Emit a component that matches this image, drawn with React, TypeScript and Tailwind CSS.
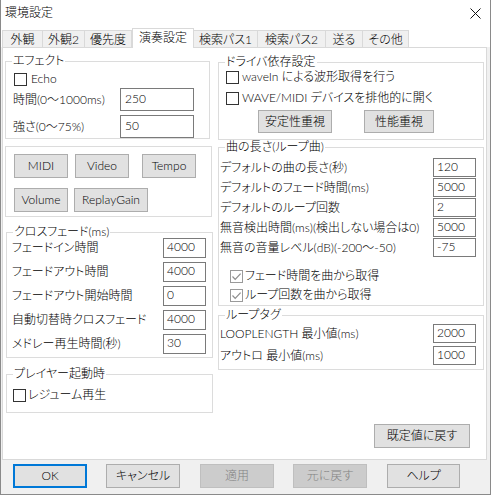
import React from "react";

function Check({ checked = false }: { checked?: boolean }) {
    return (
        <span
            className={`flex h-[13px] w-[13px] shrink-0 items-center justify-center border bg-white ${checked ? "border-[#9a9a9a]" : "border-[#333333]"}`}
        >
            {checked && (
                <svg width="11" height="11" viewBox="0 0 11 11">
                    <path d="M1.5 5.5 L4.2 8.3 L9.6 2.6" fill="none" stroke="#8c8c8c" strokeWidth="1.2" />
                </svg>
            )}
        </span>
    );
}

function Btn({ children, className = "" }: { children: React.ReactNode; className?: string }) {
    return (
        <div className={`flex shrink-0 items-center justify-center border border-[#adadad] bg-[#e1e1e1] ${className}`}>
            {children}
        </div>
    );
}

function Field({ value, className = "" }: { value: string; className?: string }) {
    return (
        <div className={`shrink-0 border border-[#7a7a7a] bg-white ${className}`}>{value}</div>
    );
}

function Group({ title, className = "", children }: { title?: string; className?: string; children: React.ReactNode }) {
    return (
        <fieldset className={`border border-[#dcdcdc] ${className}`}>
            {title && <legend className="ml-[6px] px-[1px] leading-[14px]">{title}</legend>}
            {children}
        </fieldset>
    );
}

// small numeric box used in the crossfade group
function NumRow({ label, value }: { label: string; value: string }) {
    return (
        <div className="flex h-[20px] items-center">
            <span className="flex-1 whitespace-nowrap">{label}</span>
            <Field value={value} className="h-[20px] w-[43px] pl-[3px] leading-[16px]" />
        </div>
    );
}

function SongRow({ label, value }: { label: string; value: string }) {
    return (
        <div className="flex h-[19px] items-center">
            <span className="flex-1 whitespace-nowrap">{label}</span>
            <Field value={value} className="h-[19px] w-[43px] pl-[3px] leading-[15px]" />
        </div>
    );
}

const tabs = [
    { name: "外観", w: "w-[41px]" },
    { name: "外観2", w: "w-[42px]" },
    { name: "優先度", w: "w-[47px]" },
    { name: "演奏設定", w: "w-[62px]", active: true },
    { name: "検索パス1", w: "w-[64px]" },
    { name: "検索パス2", w: "w-[68px]" },
    { name: "送る", w: "w-[37px]" },
    { name: "その他", w: "w-[46px]" },
];

export default function App() {
    return (
        <div className="flex h-[495px] w-[491px] flex-col border-x border-b border-[#8a8a8a] bg-white font-['Lato','Noto_Sans_CJK_JP',sans-serif] text-[12px] font-light leading-[14px] text-black [font-feature-settings:'palt']">
            {/* title bar */}
            <div className="flex h-[28px] shrink-0 items-center justify-between pb-[2px] pl-[4px] pr-[9px]">
                <span>環境設定</span>
                <svg width="11" height="11" viewBox="0 0 11 11">
                    <path d="M0.5 0.5 L10.5 10.5 M10.5 0.5 L0.5 10.5" stroke="#111" strokeWidth="1" />
                </svg>
            </div>

            {/* tabs */}
            <div className="flex h-[19px] shrink-0 items-end pl-[1px]">
                {tabs.map((t, i) =>
                    t.active ? (
                        <div
                            key={t.name}
                            className={`relative z-10 mb-[-1px] flex h-[20px] items-center justify-center border-x border-t border-[#d9d9d9] bg-white pb-[1px] ${t.w}`}
                        >
                            {t.name}
                        </div>
                    ) : (
                        <div
                            key={t.name}
                            className={`flex h-[17px] items-center justify-center border-t border-r border-[#d9d9d9] bg-[#f0f0f0] pt-[2px] ${i === 0 ? "border-l" : ""} ${t.w}`}
                        >
                            {t.name}
                        </div>
                    )
                )}
            </div>

            <div className="flex flex-1 flex-col bg-[#f0f0f0]">
                {/* tab panel */}
                <div className="ml-[1px] flex h-[413px] w-[485px] border border-[#d9d9d9] bg-white pl-[2px] pt-[6px]">
                    {/* left column */}
                    <div className="flex w-[208px] flex-col">
                        <Group title="エフェクト" className="w-[205px]">
                            <div className="flex flex-col pl-[7px] pr-[15px] pt-[3px]">
                                <div className="flex h-[16px] items-center gap-[4px] pl-[1px]">
                                    <Check />
                                    <span>Echo</span>
                                </div>
                                <div className="mt-[1px] flex h-[23px] items-center">
                                    <span className="flex-1">時間(0〜1000ms)</span>
                                    <Field value="250" className="h-[23px] w-[74px] pl-[4px] pt-[3px]" />
                                </div>
                                <div className="mt-[4px] flex h-[23px] items-center">
                                    <span className="flex-1">強さ(0〜75%)</span>
                                    <Field value="50" className="h-[23px] w-[74px] pl-[4px] pt-[3px]" />
                                </div>
                            </div>
                        </Group>

                        <Group className="mt-[7px] w-[207px]">
                            <div className="flex flex-col gap-[10px] pb-[4px] pl-[8px] pt-[7px]">
                                <div className="flex">
                                    <Btn className="h-[24px] w-[54px]">MIDI</Btn>
                                    <Btn className="ml-[7px] h-[24px] w-[54px]">Video</Btn>
                                    <Btn className="ml-[13px] h-[24px] w-[54px]">Tempo</Btn>
                                </div>
                                <div className="flex">
                                    <Btn className="h-[24px] w-[54px]">Volume</Btn>
                                    <Btn className="ml-[6px] h-[24px] w-[74px]">ReplayGain</Btn>
                                </div>
                            </div>
                        </Group>

                        <Group title="クロスフェード(ms)" className="ml-[1px] mt-[8px] w-[207px]">
                            <div className="mt-[-1px] flex flex-col gap-[4px] pb-[3px] pl-[5px] pr-[6px]">
                                <NumRow label="フェードイン時間" value="4000" />
                                <NumRow label="フェードアウト時間" value="4000" />
                                <NumRow label="フェードアウト開始時間" value="0" />
                                <NumRow label="自動切替時クロスフェード" value="4000" />
                                <NumRow label="メドレー再生時間(秒)" value="30" />
                            </div>
                        </Group>

                        <Group title="プレイヤー起動時" className="ml-[1px] mt-[9px] w-[207px]">
                            <div className="mb-[9px] mt-[6px] flex h-[16px] items-center gap-[2px] pl-[6px]">
                                <Check />
                                <span>レジューム再生</span>
                            </div>
                        </Group>
                    </div>

                    {/* right column */}
                    <div className="ml-[5px] flex w-[266px] flex-col pt-[1px]">
                        <Group title="ドライバ依存設定" className="w-[266px]">
                            <div className="flex flex-col pb-[6px] pl-[7px]">
                                <div className="flex h-[16px] items-center gap-[3px]">
                                    <Check />
                                    <span>waveIn による波形取得を行う</span>
                                </div>
                                <div className="mt-[5px] flex h-[16px] items-center gap-[3px]">
                                    <Check />
                                    <span>WAVE/MIDI デバイスを排他的に開く</span>
                                </div>
                                <div className="mt-[4px] flex pl-[32px]">
                                    <Btn className="h-[23px] w-[74px]">安定性重視</Btn>
                                    <Btn className="ml-[32px] h-[23px] w-[70px]">性能重視</Btn>
                                </div>
                            </div>
                        </Group>

                        <Group title="曲の長さ(ループ曲)" className="w-[266px]">
                            <div className="flex flex-col pb-[2px] pl-[1px] pr-[7px] pt-[4px]">
                                <div className="flex flex-col gap-[1px]">
                                    <SongRow label="デフォルトの曲の長さ(秒)" value="120" />
                                    <SongRow label="デフォルトのフェード時間(ms)" value="5000" />
                                    <SongRow label="デフォルトのループ回数" value="2" />
                                    <SongRow label="無音検出時間(ms)(検出しない場合は0)" value="5000" />
                                    <SongRow label="無音の音量レベル(dB)(-200〜-50)" value="-75" />
                                </div>
                                <div className="mt-[11px] flex h-[16px] items-center gap-[2px] pl-[10px]">
                                    <Check checked />
                                    <span>フェード時間を曲から取得</span>
                                </div>
                                <div className="mt-[3px] flex h-[16px] items-center gap-[2px] pl-[10px]">
                                    <Check checked />
                                    <span>ループ回数を曲から取得</span>
                                </div>
                            </div>
                        </Group>

                        <Group title="ループタグ" className="mt-[2px] w-[266px]">
                            <div className="flex flex-col gap-[3px] pb-[4px] pl-[1px] pr-[7px] pt-[2px]">
                                <SongRow label="LOOPLENGTH 最小値(ms)" value="2000" />
                                <SongRow label="アウトロ 最小値(ms)" value="1000" />
                            </div>
                        </Group>

                        <Btn className="mr-[14px] mt-[54px] h-[24px] w-[96px] self-end">既定値に戻す</Btn>
                    </div>
                </div>

                {/* dialog buttons */}
                <div className="mt-[4px] flex pl-[12px]">
                    <div className="flex h-[24px] w-[74px] items-center justify-center border-2 border-[#0078d7] bg-[#e1e1e1]">OK</div>
                    <Btn className="ml-[19px] h-[24px] w-[74px]">キャンセル</Btn>
                    <div className="ml-[20px] flex h-[24px] w-[74px] items-center justify-center border border-[#bfbfbf] bg-[#cccccc] text-[#838383]">適用</div>
                    <div className="ml-[19px] flex h-[24px] w-[74px] items-center justify-center border border-[#bfbfbf] bg-[#cccccc] text-[#838383]">元に戻す</div>
                    <Btn className="ml-[20px] h-[24px] w-[73px]">ヘルプ</Btn>
                </div>
            </div>
        </div>
    );
}
